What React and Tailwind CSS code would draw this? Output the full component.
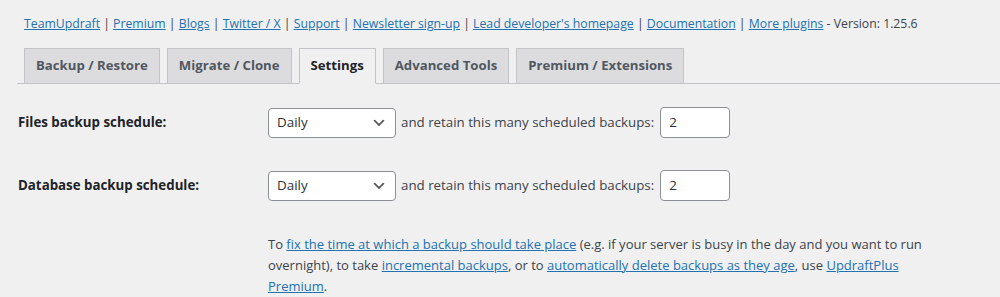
import React from "react";

const font = { fontFamily: '"Open Sans", "Noto Sans", sans-serif' };

function Chevron() {
  return (
    <svg width="16" height="16" viewBox="0 0 20 20" className="absolute right-[8px] top-1/2 -translate-y-1/2">
      <path d="M5 6l5 5 5-5 2 1-7 7-7-7 2-1z" fill="#555" />
    </svg>
  );
}

function Select() {
  return (
    <div className="relative w-[128px] h-[30px] rounded-[4px] border border-[#8c8f94] bg-white flex items-center pl-[8px] text-[13.4px] text-[#2c3338]">
      Daily
      <Chevron />
    </div>
  );
}

function NumInput() {
  return (
    <div className="w-[70px] h-[31px] rounded-[4px] border border-[#8c8f94] bg-white flex items-center pl-[8px] text-[13.4px] text-[#2c3338]">
      2
    </div>
  );
}

function Row({ label, mt }) {
  return (
    <div className={`flex items-center ${mt}`}>
      <div className="w-[250px] text-[13.3px] font-bold text-[#1d2327]">{label}</div>
      <Select />
      <span className="ml-[5px] mr-[6px] text-[13.3px] text-[#3c434a]">and retain this many scheduled backups:</span>
      <NumInput />
    </div>
  );
}

export default function App() {
  const links = [
    "TeamUpdraft",
    "Premium",
    "Blogs",
    "Twitter / X",
    "Support",
    "Newsletter sign-up",
    "Lead developer's homepage",
    "Documentation",
    "More plugins",
  ];
  const tabs = ["Backup / Restore", "Migrate / Clone", "Settings", "Advanced Tools", "Premium / Extensions"];
  return (
    <div className="w-[1000px] h-[297px] bg-[#f0f0f1] overflow-hidden pl-[17px]" style={font}>
      <div className="pt-[15px] pl-[7px] text-[12.25px] leading-[18px] text-[#3c434a]">
        {links.map((l, i) => (
          <React.Fragment key={l}>
            <a className="text-[#2271b1] underline">{l}</a>
            {i < links.length - 1 ? " | " : " - Version: 1.25.6"}
          </React.Fragment>
        ))}
      </div>
      <div className="mt-[15px] flex items-end border-b border-[#c3c4c7] h-[36px]">
        {tabs.map((t) => {
          const active = t === "Settings";
          return (
            <div
              key={t}
              className={`ml-[7px] -mb-px h-[36px] px-[11px] flex items-center border border-[#c3c4c7] text-[13.2px] font-bold ${
                active ? "bg-[#f0f0f1] border-b-[#f0f0f1] text-[#1d2327]" : "bg-[#dcdcde] text-[#50575e]"
              }`}
            >
              {t}
            </div>
          );
        })}
      </div>
      <div className="pl-px">
        <Row label="Files backup schedule:" mt="mt-[23px]" />
        <Row label="Database backup schedule:" mt="mt-[32px]" />
        <p className="mt-[33px] ml-[250px] w-[700px] text-[13px] leading-[21px] text-[#3c434a]">
          To <a className="text-[#2271b1] underline">fix the time at which a backup should take place</a> (e.g. if your server is busy in the day and you want to run overnight), to take{" "}
          <a className="text-[#2271b1] underline">incremental backups</a>, or to{" "}
          <a className="text-[#2271b1] underline">automatically delete backups as they age</a>, use{" "}
          <a className="text-[#2271b1] underline">
            UpdraftPlus
            <br />
            Premium
          </a>
          .
        </p>
      </div>
    </div>
  );
}
